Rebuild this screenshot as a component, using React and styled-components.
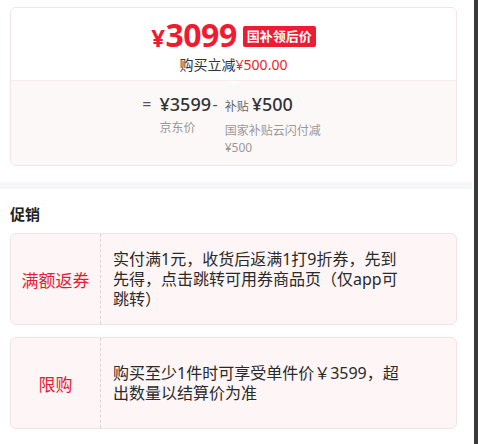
import styled, { createGlobalStyle } from 'styled-components'

const GlobalStyle = createGlobalStyle`
  body {
    margin: 0;
    background: #fff;
    font-family: "Noto Sans", "Noto Sans CJK SC", sans-serif;
    color: #333;
  }
`;

const Page = styled.div`
  display: flex;
  width: 478px;
  height: 444px;
  overflow: hidden;
`;

const Main = styled.div`
  flex: 1;
  display: flex;
  flex-direction: column;
  padding-top: 7px;
`;

const ScrollBar = styled.div`
  width: 4px;
  background: #3a3a3a;
`;

const PriceCard = styled.div`
  margin: 0 17px 0 10px;
  border: 1px solid #f3e4e6;
  border-radius: 6px;
  overflow: hidden;
`;

const PriceTop = styled.div`
  display: flex;
  flex-direction: column;
  align-items: center;
  padding: 9px 0 5px;
  background: #fff;
  position: relative;
  border-bottom: 1px solid #f6eced;

  &::after {
    content: "";
    position: absolute;
    left: 50%;
    bottom: -5px;
    margin-left: -4px;
    border-left: 4px solid transparent;
    border-right: 4px solid transparent;
    border-top: 4px solid #fff;
  }
`;

const PriceRow = styled.div`
  display: flex;
  align-items: center;
  gap: 6px;
  height: 38px;
`;

const BigPrice = styled.span`
  color: #ef1b30;
  font-weight: 700;
  font-size: 32px;
  line-height: 38px;
  letter-spacing: -0.5px;

  small {
    font-size: 24px;
    margin-right: 1px;
  }
`;

const Badge = styled.span`
  background: #ef1b30;
  color: #fff;
  font-size: 13px;
  font-weight: 700;
  line-height: 21px;
  padding: 0 4px;
  border-radius: 2px;
`;

const SubLine = styled.div`
  font-size: 14px;
  line-height: 20px;
  color: #333;

  em {
    font-style: normal;
    color: #ef1b30;
  }
`;

const PriceBottom = styled.div`
  background: #fdf8f8;
  display: flex;
  justify-content: center;
  align-items: flex-start;
  padding: 11px 0 9px;
`;

const Op = styled.span`
  font-size: 16px;
  line-height: 24px;
  color: #555;
  margin-right: ${p => p.$gap}px;
`;

const Col = styled.div`
  display: flex;
  flex-direction: column;
  width: ${p => p.$w}px;
  margin-right: ${p => p.$mr || 0}px;
`;

const Amount = styled.div`
  font-size: 18px;
  font-weight: 500;
  line-height: 24px;
  color: #333;
  white-space: nowrap;

  small {
    font-size: 12px;
    font-weight: 400;
    color: #666;
    margin-right: 3px;
  }
`;

const Note = styled.div`
  font-size: 12px;
  line-height: 17px;
  color: #999;
  margin-top: 3px;
`;

const Divider = styled.div`
  height: 7px;
  background: #f6f7fb;
  margin-top: 16px;
  margin-right: 2px;
`;

const Section = styled.div`
  display: flex;
  flex-direction: column;
  gap: 12px;
  padding: 14px 17px 0 10px;
`;

const Title = styled.div`
  font-size: 15px;
  font-weight: 700;
  line-height: 22px;
  color: #222;
  margin-bottom: -4px;
`;

const Promo = styled.div`
  display: flex;
  height: 90px;
  border: 1px solid #f5e2e5;
  border-radius: 6px;
  background: #fdf5f6;
`;

const PromoLabel = styled.div`
  width: 89px;
  flex-shrink: 0;
  display: flex;
  align-items: center;
  justify-content: center;
  border-right: 1px dashed #ddd3d5;
  color: #e61c34;
  font-size: 17px;
`;

const PromoText = styled.div`
  display: flex;
  align-items: center;
  padding: 0 52px 0 12px;
  font-size: 16px;
  line-height: 20px;
  color: #2a2a2a;
`;

const promos = [
  { label: '满额返券', text: '实付满1元，收货后返满1打9折券，先到先得，点击跳转可用券商品页（仅app可跳转）' },
  { label: '限购', text: '购买至少1件时可享受单件价￥3599，超出数量以结算价为准' },
];

function App() {
  return (
    <Page>
      <GlobalStyle />
      <Main>
        <PriceCard>
          <PriceTop>
            <PriceRow>
              <BigPrice><small>¥</small>3099</BigPrice>
              <Badge>国补领后价</Badge>
            </PriceRow>
            <SubLine>购买立减<em>¥500.00</em></SubLine>
          </PriceTop>
          <PriceBottom>
            <Op $gap={8}>=</Op>
            <Col $w={53}>
              <Amount>¥3599</Amount>
              <Note>京东价</Note>
            </Col>
            <Op $gap={7}>-</Op>
            <Col $w={100}>
              <Amount><small>补贴</small>¥500</Amount>
              <Note>国家补贴云闪付减¥500</Note>
            </Col>
          </PriceBottom>
        </PriceCard>
        <Divider />
        <Section>
          <Title>促销</Title>
          {promos.map((p, i) => (
            <Promo key={i}>
              <PromoLabel>{p.label}</PromoLabel>
              <PromoText>{p.text}</PromoText>
            </Promo>
          ))}
        </Section>
      </Main>
      <ScrollBar />
    </Page>
  );
}

export default App;
